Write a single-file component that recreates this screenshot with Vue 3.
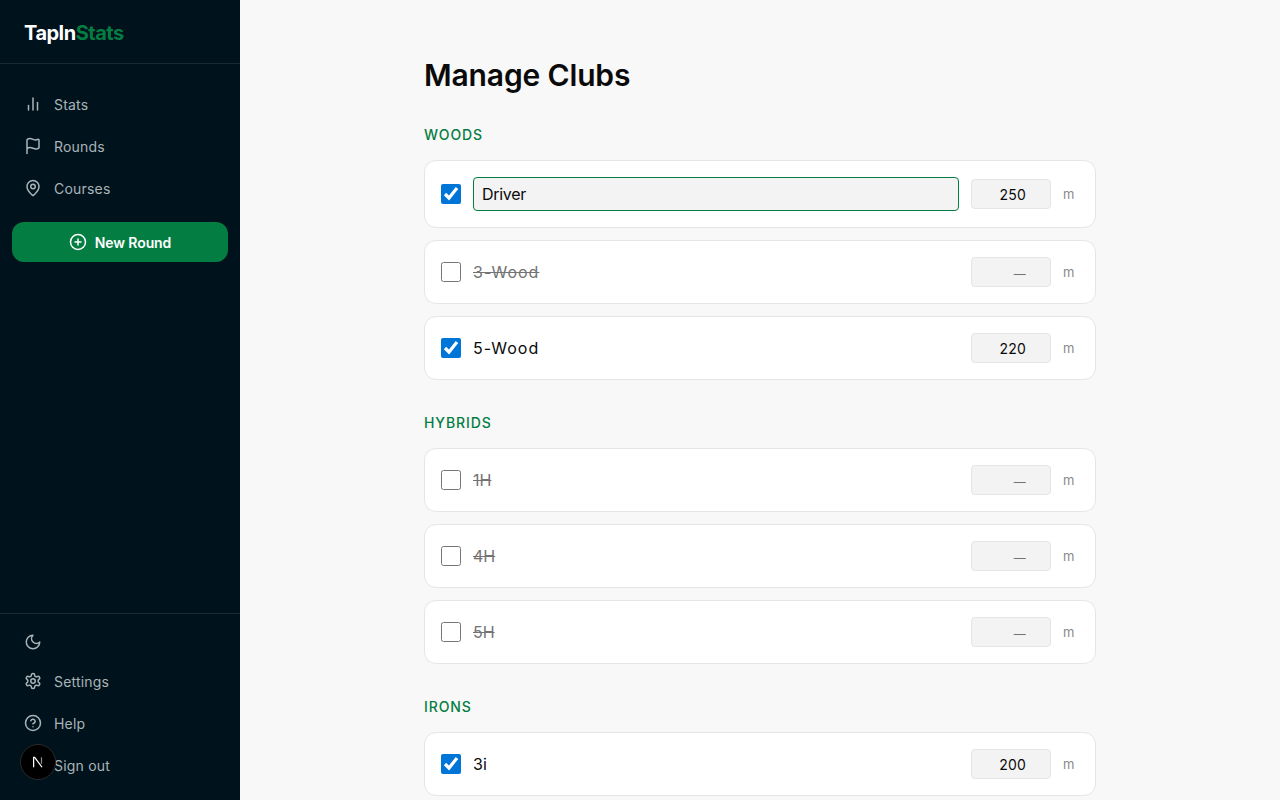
<script setup>
const top = [
  { label: 'Stats', icon: 'stats' },
  { label: 'Rounds', icon: 'flag' },
  { label: 'Courses', icon: 'pin' },
]
const bottom = [
  { label: 'Settings', icon: 'gear' },
  { label: 'Help', icon: 'help' },
  { label: 'Sign out', icon: null },
]
const groups = [
  { name: 'Woods', clubs: [
    { name: 'Driver', on: true, dist: 250, editing: true },
    { name: '3-Wood', on: false, wide: true },
    { name: '5-Wood', on: true, dist: 220, wide: true },
  ]},
  { name: 'Hybrids', clubs: [
    { name: '1H', on: false },
    { name: '4H', on: false },
    { name: '5H', on: false },
  ]},
  { name: 'Irons', clubs: [
    { name: '3i', on: true, dist: 200 },
  ]},
]
</script>

<template>
  <div class="app">
    <aside class="side">
      <div class="brand"><span class="tap">TapIn</span><span class="st">Stats</span></div>
      <nav class="nav">
        <a v-for="n in top" :key="n.label" class="item">
          <svg class="ic" viewBox="0 0 24 24">
            <template v-if="n.icon === 'stats'">
              <path d="M18 20V10" /><path d="M12 20V4" /><path d="M6 20v-6" />
            </template>
            <path v-if="n.icon === 'flag'" d="M4 22V4a1 1 0 0 1 .4-.8A6 6 0 0 1 8 2c3 0 5 2 7.333 2q2 0 3.067-.8A1 1 0 0 1 20 4v10a1 1 0 0 1-.4.8A6 6 0 0 1 16 16c-3 0-5-2-8-2a6 6 0 0 0-4 1.528" />
            <template v-if="n.icon === 'pin'">
              <path d="M20 10c0 4.993-5.539 10.193-7.399 11.799a1 1 0 0 1-1.202 0C9.539 20.193 4 14.993 4 10a8 8 0 0 1 16 0" />
              <circle cx="12" cy="10" r="3" />
            </template>
          </svg>
          <span>{{ n.label }}</span>
        </a>
        <button class="new">
          <svg class="ic plus" viewBox="0 0 24 24"><circle cx="12" cy="12" r="10" /><path d="M8 12h8" /><path d="M12 8v8" /></svg>
          New Round
        </button>
      </nav>
      <div class="foot">
        <a class="item theme">
          <svg class="ic" viewBox="0 0 24 24"><path d="M12 3a6 6 0 0 0 9 9 9 9 0 1 1-9-9Z" /></svg>
        </a>
        <a v-for="n in bottom" :key="n.label" class="item">
          <svg class="ic" viewBox="0 0 24 24">
            <template v-if="n.icon === 'gear'">
              <path d="M12.22 2h-.44a2 2 0 0 0-2 2v.18a2 2 0 0 1-1 1.73l-.43.25a2 2 0 0 1-2 0l-.15-.08a2 2 0 0 0-2.73.73l-.22.38a2 2 0 0 0 .73 2.73l.15.1a2 2 0 0 1 1 1.72v.51a2 2 0 0 1-1 1.74l-.15.09a2 2 0 0 0-.73 2.73l.22.38a2 2 0 0 0 2.73.73l.15-.08a2 2 0 0 1 2 0l.43.25a2 2 0 0 1 1 1.73V20a2 2 0 0 0 2 2h.44a2 2 0 0 0 2-2v-.18a2 2 0 0 1 1-1.73l.43-.25a2 2 0 0 1 2 0l.15.08a2 2 0 0 0 2.73-.73l.22-.39a2 2 0 0 0-.73-2.73l-.15-.08a2 2 0 0 1-1-1.74v-.5a2 2 0 0 1 1-1.74l.15-.09a2 2 0 0 0 .73-2.73l-.22-.38a2 2 0 0 0-2.73-.73l-.15.08a2 2 0 0 1-2 0l-.43-.25a2 2 0 0 1-1-1.73V4a2 2 0 0 0-2-2z" />
              <circle cx="12" cy="12" r="3" />
            </template>
            <template v-if="n.icon === 'help'">
              <circle cx="12" cy="12" r="10" /><path d="M9.09 9a3 3 0 0 1 5.83 1c0 2-3 3-3 3" /><path d="M12 17h.01" />
            </template>
          </svg>
          <span>{{ n.label }}</span>
        </a>
      </div>
      <div class="badge">
        <svg viewBox="0 0 16 16" class="next"><path d="M3 14V2.6h1.2l8.4 11.4" /><path class="stem" d="M12 2.6v7.4" /></svg>
      </div>
    </aside>

    <main class="main">
      <div class="wrap">
        <h1>Manage Clubs</h1>
        <section v-for="g in groups" :key="g.name" class="group">
          <h2>{{ g.name }}</h2>
          <div class="rows">
            <div v-for="c in g.clubs" :key="c.name" class="row">
              <input class="check" type="checkbox" :checked="c.on" />
              <input v-if="c.editing" class="name-edit" :value="c.name" />
              <span v-else class="name" :class="{ off: !c.on, wide: c.wide }">{{ c.name }}</span>
              <input class="dist" :class="{ empty: !c.on }" :value="c.on ? c.dist : ''" :placeholder="c.on ? '' : '—'" />
              <span class="unit">m</span>
            </div>
          </div>
        </section>
      </div>
    </main>
  </div>
</template>

<style>
html, body { margin: 0; height: 100%; overflow: hidden; background: #f8f8f8; }
</style>

<style scoped>
.app {
  display: flex;
  height: 800px;
  overflow: hidden;
  font-family: Inter, "Noto Sans", sans-serif;
  color: #0a0a0a;
}
.side {
  position: relative;
  flex: 0 0 240px;
  width: 240px;
  height: 800px;
  background: #00121b;
  display: flex;
  flex-direction: column;
}
.brand {
  box-sizing: border-box;
  height: 64px;
  padding: 21px 24px 0;
  font-size: 20px;
  line-height: 24px;
  font-weight: 700;
  letter-spacing: -0.5px;
  border-bottom: 1px solid #1b2a31;
}
.tap { color: #fff; }
.st { color: #047d43; }
.nav {
  flex: 1;
  padding: 19px 12px 0;
  display: flex;
  flex-direction: column;
}
.item {
  display: flex;
  align-items: center;
  gap: 12px;
  height: 42px;
  padding: 0 12px;
  font-size: 14px;
  letter-spacing: 0.2px;
  color: #a9b4b9;
}
.ic {
  width: 18px;
  height: 18px;
  fill: none;
  stroke: currentColor;
  stroke-width: 2;
  stroke-linecap: round;
  stroke-linejoin: round;
  flex: none;
}
.new {
  margin-top: 13px;
  height: 40px;
  border: 0;
  border-radius: 12px;
  background: #047d43;
  color: #fff;
  font-family: inherit;
  font-size: 14px;
  font-weight: 600;
  letter-spacing: -0.1px;
  display: flex;
  align-items: center;
  justify-content: center;
  gap: 8px;
}
.foot {
  border-top: 1px solid #1b2a31;
  padding: 10px 12px 14px;
  display: flex;
  flex-direction: column;
}
.theme { height: 36px; }
.badge {
  position: absolute;
  left: 20px;
  top: 744px;
  width: 36px;
  height: 36px;
  box-sizing: border-box;
  border-radius: 50%;
  background: #000;
  border: 1px solid #2a2a2a;
  display: flex;
  align-items: center;
  justify-content: center;
}
.next {
  width: 14px;
  height: 14px;
  fill: none;
  stroke: #fff;
  stroke-width: 1.4;
}
.stem { opacity: 0.55; }
.main {
  flex: 1;
  background: #f8f8f8;
  min-width: 0;
}
.wrap {
  width: 672px;
  margin: 0 auto;
  padding-top: 56px;
}
h1 {
  margin: 0 0 31px;
  font-size: 30px;
  line-height: 38px;
  font-weight: 600;
  letter-spacing: -0.15px;
}
.group { margin-bottom: 33px; }
h2 {
  margin: 0 0 15px;
  font-size: 14px;
  line-height: 20px;
  font-weight: 500;
  letter-spacing: 0.9px;
  text-transform: uppercase;
  color: #047d43;
}
.rows {
  display: flex;
  flex-direction: column;
  gap: 12px;
}
.row {
  display: flex;
  align-items: center;
  gap: 12px;
  background: #fff;
  border: 1px solid #e5e5e5;
  border-radius: 12px;
  padding: 16px;
}
.check {
  width: 20px;
  height: 20px;
  margin: 0;
  flex: none;
  accent-color: #0075d8;
}
.name-edit {
  flex: 1;
  min-width: 0;
  height: 34px;
  box-sizing: border-box;
  border: 1px solid #047d43;
  border-radius: 4px;
  background: #f3f3f3;
  padding: 0 8px;
  font-family: inherit;
  font-size: 16px;
  letter-spacing: -0.3px;
  color: #0a0a0a;
  outline: none;
}
.name {
  flex: 1;
  font-size: 16px;
  line-height: 30px;
}
.name.wide { letter-spacing: 1px; }
.name.off {
  color: #737373;
  text-decoration: line-through;
}
.dist {
  width: 80px;
  height: 30px;
  box-sizing: border-box;
  border: 1px solid #e5e5e5;
  border-radius: 4px;
  background: #f3f3f3;
  padding: 0 24px 0 0;
  text-align: right;
  font-family: inherit;
  font-size: 14px;
  letter-spacing: 0.2px;
  color: #0a0a0a;
  outline: none;
}
.dist::placeholder { color: #737373; opacity: 1; font-size: 12px; }
.unit {
  width: 16px;
  font-size: 13px;
  color: #8a8a8a;
}
</style>
